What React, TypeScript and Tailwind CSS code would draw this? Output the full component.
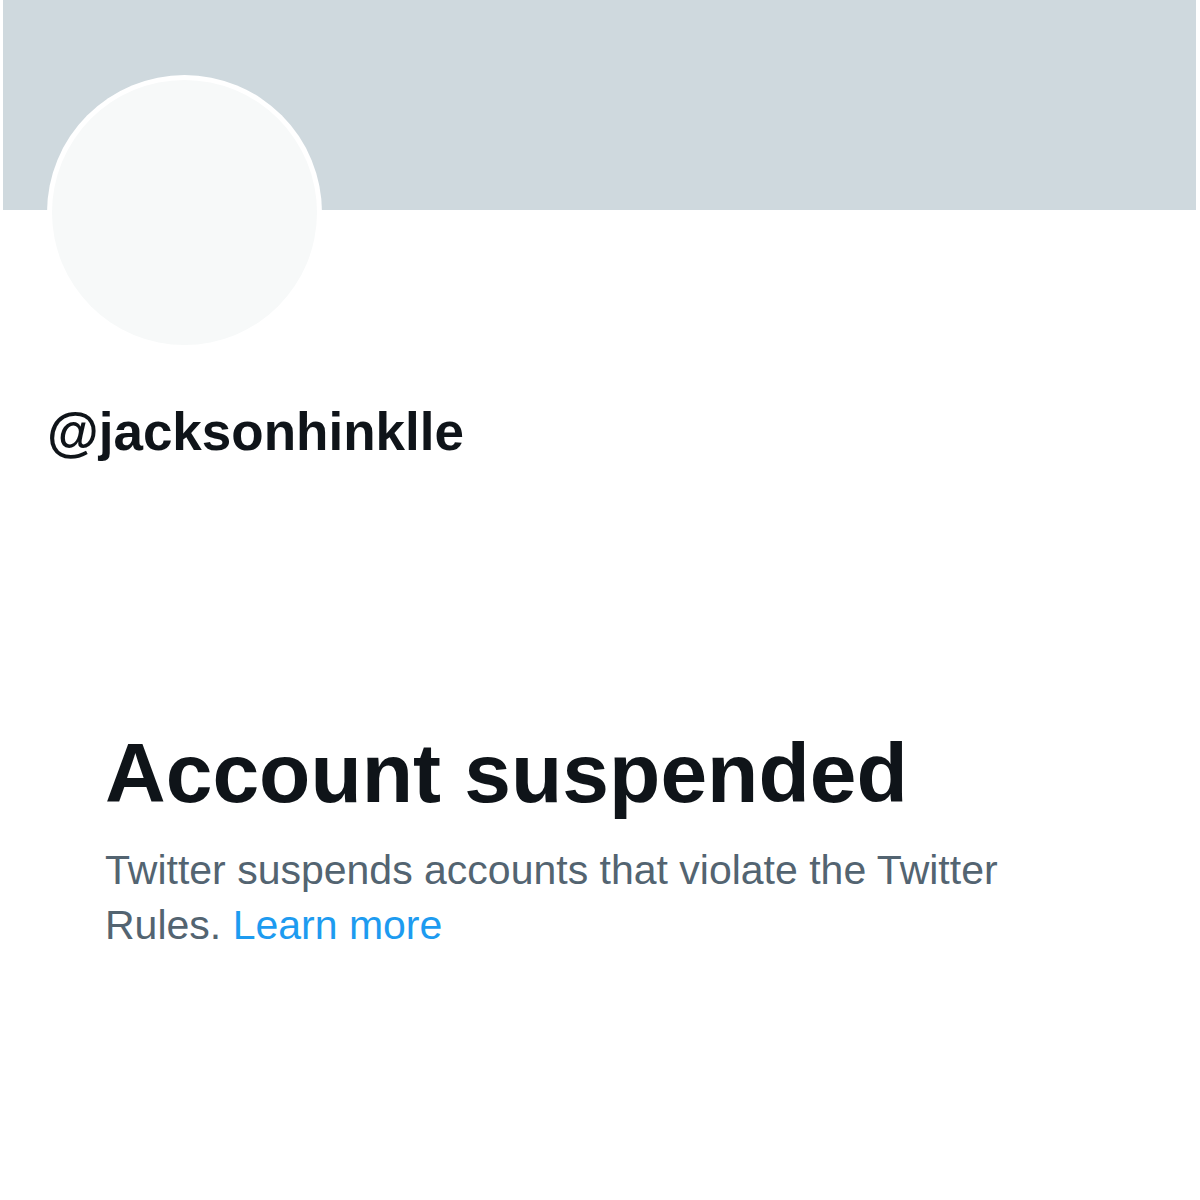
import React from 'react';

export default function App() {
  return (
    <div className="w-[1200px] h-[1200px] bg-white overflow-hidden font-['Liberation_Sans',Arial,sans-serif]">
      {/* banner */}
      <div className="h-[210px] ml-[3px] mr-[4px] bg-[#cfd9de]" />

      {/* avatar overlaps the banner */}
      <div className="relative ml-[47px] -mt-[135px] w-[275px] h-[275px] rounded-full bg-white p-[5px]">
        <div className="w-full h-full rounded-full bg-[#f7f9f9]" />
      </div>

      <div className="ml-[47px] mt-[50px] text-[53px] leading-[64px] font-bold text-[#0f1419]">
        @jacksonhinklle
      </div>

      <div className="pl-[105px] mt-[259px]">
        <h1 className="text-[84px] leading-[100px] font-bold text-[#0f1419]">
          Account suspended
        </h1>
        <p className="mt-[20px] w-[960px] text-[41px] leading-[55px] text-[#536471]">
          Twitter suspends accounts that violate the Twitter Rules.{' '}
          <a className="text-[#1d9bf0]">Learn more</a>
        </p>
      </div>
    </div>
  );
}
